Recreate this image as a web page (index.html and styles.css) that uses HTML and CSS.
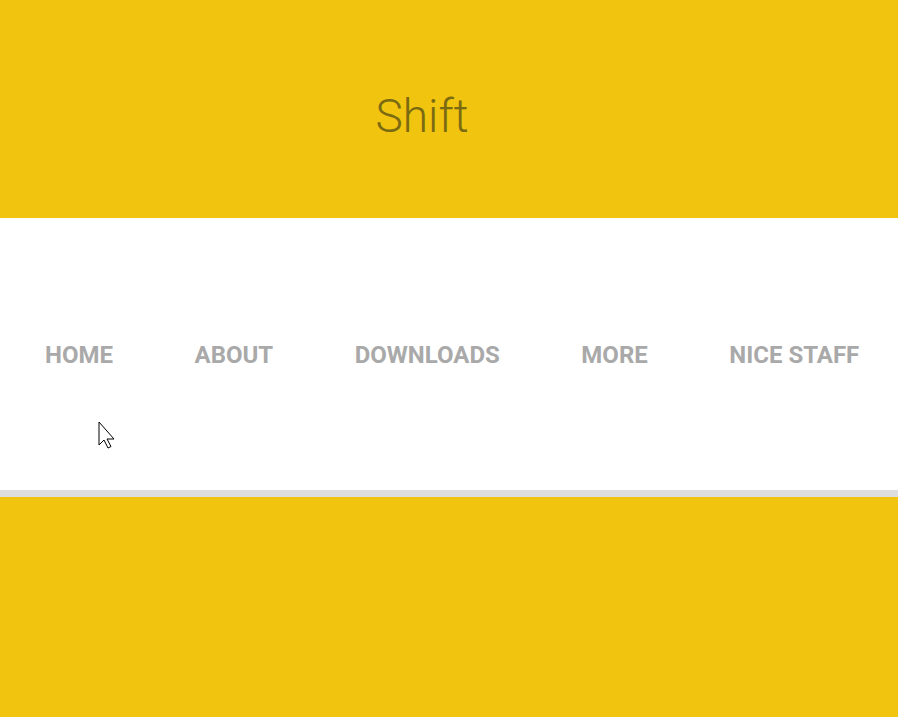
FILE: index.html
```html
<!DOCTYPE html>
<html>
<head>
<meta charset="utf-8">
<link rel="stylesheet" href="styles.css">
</head>
<body>
<header class="hero">
  <h1 class="title">Shift</h1>
</header>
<nav class="nav">
  <a class="nav-item" href="#">Home</a>
  <a class="nav-item" href="#">About</a>
  <a class="nav-item" href="#">Downloads</a>
  <a class="nav-item" href="#">More</a>
  <a class="nav-item" href="#">Nice Staff</a>
</nav>
<div class="divider"></div>
<section class="footer-band"></section>
<svg class="cursor" width="18" height="28" viewBox="0 0 18 28">
  <path d="M1 1 L1 24 L6 19 L10 27 L13 25.5 L9 18 L16 18 Z" fill="#fff" stroke="#000" stroke-width="1" stroke-linejoin="miter"/>
</svg>
</body>
</html>
```
FILE: styles.css
```css
html, body {
  margin: 0;
  padding: 0;
}
body {
  font-family: Roboto, "Noto Sans", sans-serif;
  background: #f1c40f;
  width: 898px;
  height: 717px;
  overflow: hidden;
  position: relative;
}
.hero {
  height: 218px;
  background: #f1c40f;
  display: flex;
  justify-content: center;
  align-items: flex-start;
}
.title {
  margin: 88px 0 0 -54px;
  font-weight: 300;
  font-size: 46px;
  line-height: 56px;
  color: #7a6a12;
}
.nav {
  height: 272px;
  background: #fff;
  display: flex;
  align-items: center;
  gap: 81.5px;
  padding-left: 45px;
  padding-top: 2px;
  box-sizing: border-box;
}
.nav-item {
  font-weight: 700;
  font-size: 24px;
  text-transform: uppercase;
  color: #a9a9a9;
  text-decoration: none;
  line-height: 28px;
}
.divider {
  height: 7px;
  background: #dedede;
}
.footer-band {
  height: 220px;
  background: #f1c40f;
}
.cursor {
  position: absolute;
  left: 98px;
  top: 421px;
}
```
